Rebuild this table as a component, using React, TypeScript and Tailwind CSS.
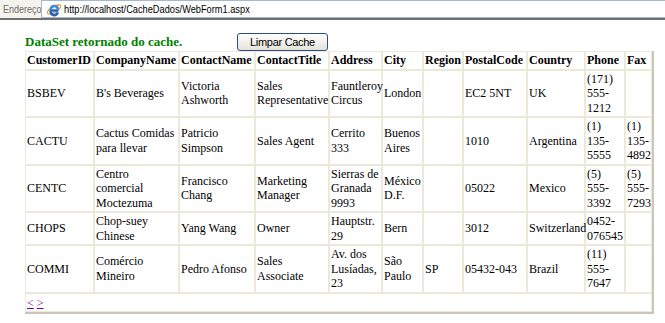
import React from 'react';

const columns = [
  { name: 'CustomerID', width: 'w-[69px]' },
  { name: 'CompanyName', width: 'w-[85px]' },
  { name: 'ContactName', width: 'w-[76px]' },
  { name: 'ContactTitle', width: 'w-[74px]' },
  { name: 'Address', width: 'w-[53px]' },
  { name: 'City', width: 'w-[41px]' },
  { name: 'Region', width: 'w-[40px]' },
  { name: 'PostalCode', width: 'w-[64px]' },
  { name: 'Country', width: 'w-[58px]' },
  { name: 'Phone', width: 'w-[40px]' },
  { name: 'Fax', width: 'w-[27px]' },
];

const customers = [
  ['BSBEV', "B's Beverages", 'Victoria Ashworth', 'Sales Representative', 'Fauntleroy Circus', 'London', '', 'EC2 5NT', 'UK', '(171) 555-1212', ''],
  ['CACTU', 'Cactus Comidas para llevar', 'Patricio Simpson', 'Sales Agent', 'Cerrito 333', 'Buenos Aires', '', '1010', 'Argentina', '(1) 135-5555', '(1) 135-4892'],
  ['CENTC', 'Centro comercial Moctezuma', 'Francisco Chang', 'Marketing Manager', 'Sierras de Granada 9993', 'México D.F.', '', '05022', 'Mexico', '(5) 555-3392', '(5) 555-7293'],
  ['CHOPS', 'Chop-suey Chinese', 'Yang Wang', 'Owner', 'Hauptstr. 29', 'Bern', '', '3012', 'Switzerland', '0452-076545', ''],
  ['COMMI', 'Comércio Mineiro', 'Pedro Afonso', 'Sales Associate', 'Av. dos Lusíadas, 23', 'São Paulo', 'SP', '05432-043', 'Brazil', '(11) 555-7647', ''],
];

function IeIcon() {
  return (
    <svg width="16" height="16" viewBox="0 0 16 16">
      <ellipse cx="8" cy="8.5" rx="7.5" ry="3" fill="none" stroke="#e8a21c" strokeWidth="1.3" transform="rotate(-30 8 8.5)" />
      <path d="M12.5 9.5 H4.8 A3.6 3.6 0 1 0 11.8 11.4" fill="none" stroke="#1f63c9" strokeWidth="2.6" />
      <path d="M4.8 8 A3.6 3.6 0 0 1 11.9 8" fill="none" stroke="#3d8ae6" strokeWidth="2.6" />
    </svg>
  );
}

export default function App() {
  return (
    <div className="w-[665px] h-[323px] bg-white overflow-hidden">
      {/* Address bar */}
      <div className="h-[20px] bg-[#f4f3ee] border-b-2 border-[#6f6f6f] flex items-start">
        <div className="w-[41px] pl-[3px] pt-[3px] overflow-hidden leading-none">
          <span className="block w-max origin-left scale-x-[0.82] text-[11px] leading-[12px] text-[#6d6d6d] font-['Liberation_Sans',sans-serif]">
            Endereço
          </span>
        </div>
        <div className="flex-1 h-[18px] bg-white border border-r-0 border-[#a5b8cc] flex items-center pl-[4px] gap-[2px]">
          <IeIcon />
          <span className="block w-max origin-left scale-x-[0.84] text-[11px] leading-[12px] text-black font-['Liberation_Sans',sans-serif]">
            http://localhost/CacheDados/WebForm1.aspx
          </span>
        </div>
      </div>

      <div className="pl-[25px] pt-[13px]">
        <div className="flex items-center h-[18px]">
          <span className="w-[212px] text-[13px] font-bold text-[#008000] font-['Liberation_Serif',serif]">
            DataSet retornado do cache.
          </span>
          <button className="w-[91px] h-[18px] rounded-[3px] border border-[#27508a] bg-linear-to-b from-white to-[#e4e2d8] text-[11px] leading-none tracking-[-0.3px] text-black font-['Liberation_Sans',sans-serif]">
            Limpar Cache
          </button>
        </div>

        <table className="w-[629px] table-fixed border-separate border-spacing-0 border-r-2 border-b-2 border-[#cac7ba] font-['Liberation_Serif',serif] text-[12px] leading-[14.5px] text-black">
          <colgroup>
            {columns.map((c) => (
              <col key={c.name} className={c.width} />
            ))}
          </colgroup>
          <thead>
            <tr>
              {columns.map((c) => (
                <th key={c.name} className="border border-[#ede9da] px-px py-px text-left font-bold whitespace-nowrap">
                  {c.name}
                </th>
              ))}
            </tr>
          </thead>
          <tbody>
            {customers.map((row) => (
              <tr key={row[0]}>
                {row.map((cell, i) => (
                  <td key={i} className="border border-[#ede9da] px-px py-px align-middle">
                    {cell}
                  </td>
                ))}
              </tr>
            ))}
            <tr>
              <td colSpan={11} className="border border-[#ede9da] px-px pt-[2px] pb-px h-[17px]">
                <a href="#" className="text-[#800080] underline">&lt;</a>{' '}
                <a href="#" className="text-[#800080] underline">&gt;</a>
              </td>
            </tr>
          </tbody>
        </table>
      </div>
    </div>
  );
}
